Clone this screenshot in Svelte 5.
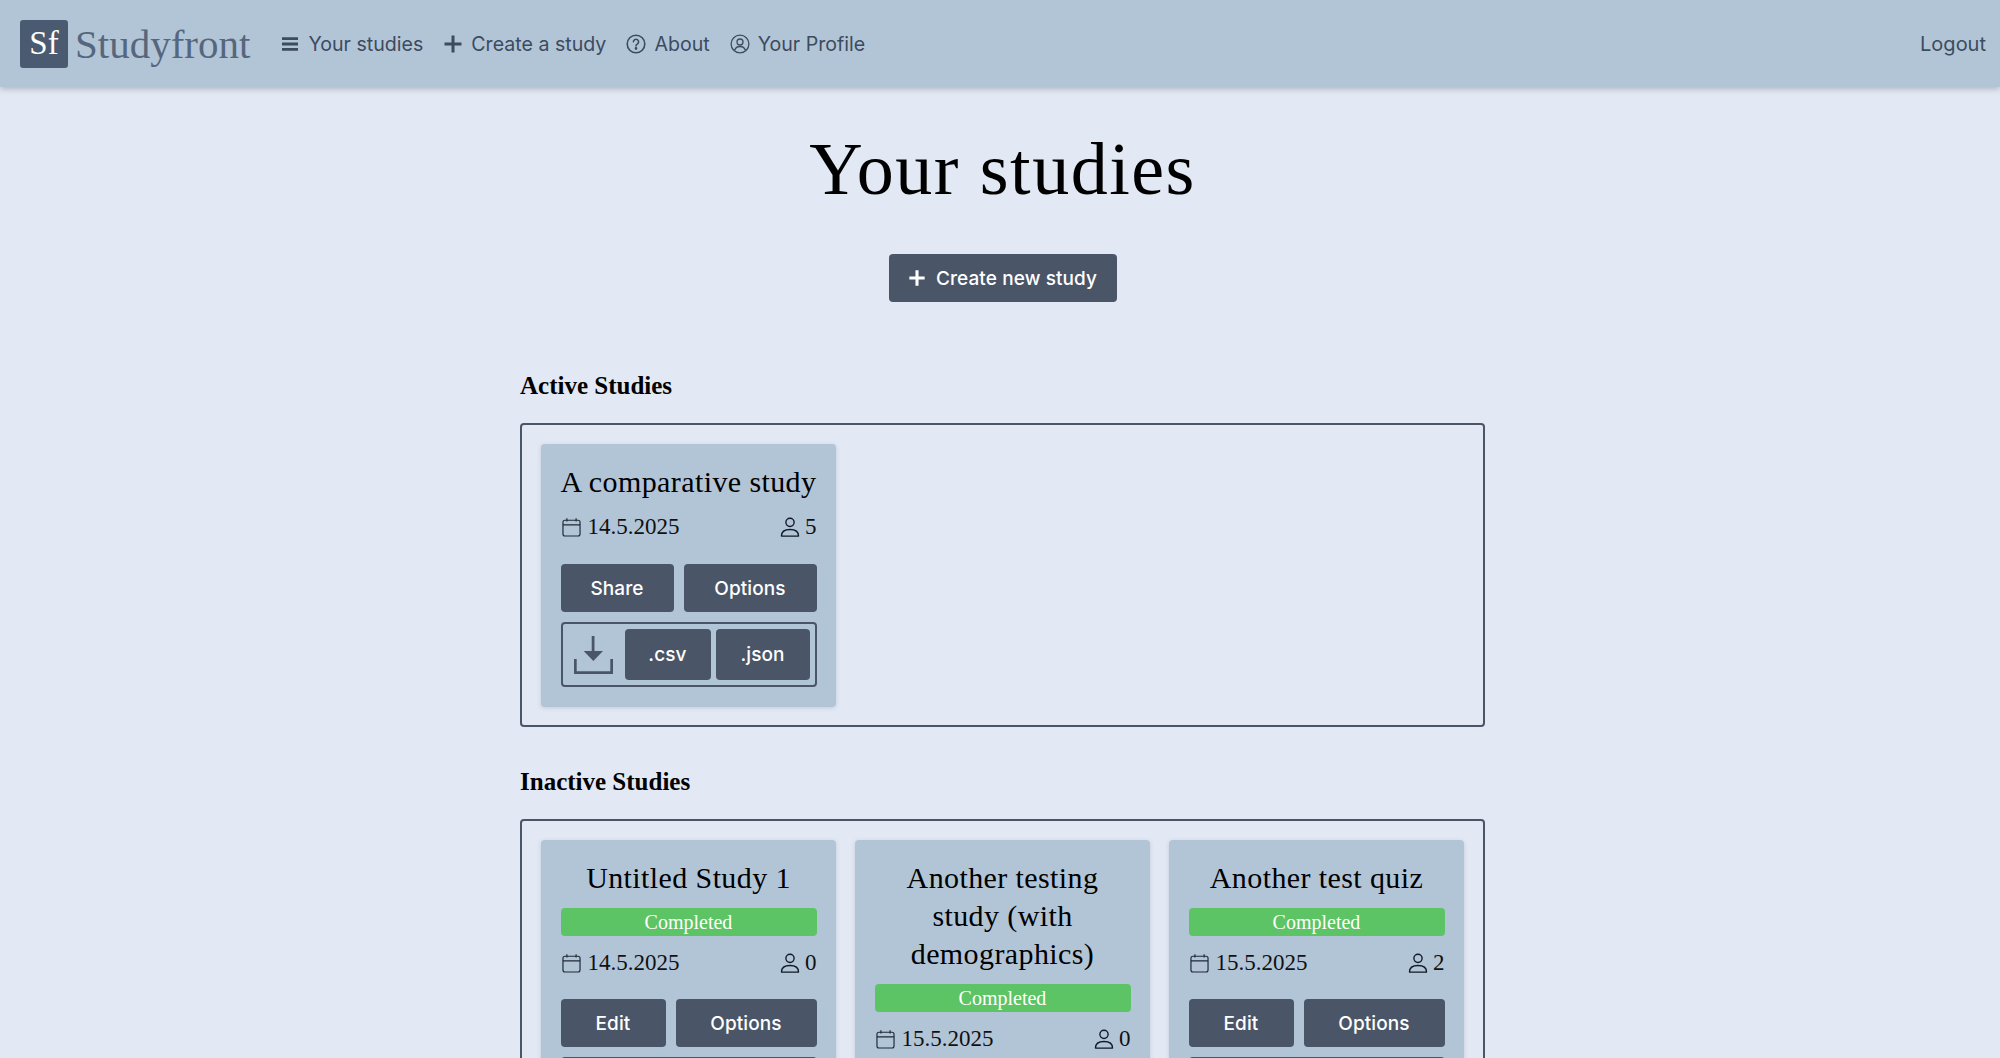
<script lang="ts">
	const active = [{ title: 'A comparative study', date: '14.5.2025', count: 5 }];
	const inactive = [
		{ title: 'Untitled Study 1', date: '14.5.2025', count: 0 },
		{ title: 'Another testing study (with demographics)', date: '15.5.2025', count: 0 },
		{ title: 'Another test quiz', date: '15.5.2025', count: 2 }
	];
</script>

{#snippet meta(date, count)}
	<div class="meta">
		<span class="meta-item">
			<svg width="21" height="21" viewBox="0 0 16 16" fill="none" stroke="#1f2937" stroke-width="0.9">
				<rect x="1.5" y="2.5" width="13" height="12" rx="1.5" />
				<path d="M1.5 6h13M4.5 1v2.500M11.500 1v2.500" />
			</svg>
			{date}
		</span>
		<span class="meta-item person">
			<svg width="22" height="22" viewBox="0 0 16 16" fill="none" stroke="#111827" stroke-width="1">
				<circle cx="8" cy="4.600" r="3" />
				<path d="M1.800 14.600c0-3.200 2.600-4.800 6.200-4.800s6.200 1.600 6.200 4.800z" stroke-linejoin="round" />
			</svg>
			{count}
		</span>
	</div>
{/snippet}

{#snippet download()}
	<div class="download">
		<svg class="dl-icon" width="39" height="38" viewBox="0 0 39 38" fill="#4a5568">
			<path d="M17.700 0h2.800v16h-2.800z" />
			<path d="M9.700 15h19.300l-9.650 10z" />
			<path d="M0 23h2.700v12.300h33.600V23H39v15H0z" />
		</svg>
		<button class="btn small csv">.csv</button>
		<button class="btn small json">.json</button>
	</div>
{/snippet}

<nav class="nav">
	<div class="brand">
		<span class="logo">Sf</span>
		<span class="brand-name">Studyfront</span>
	</div>
	<ul class="links">
		<li>
			<svg width="20" height="20" viewBox="0 0 20 20" fill="#3d4b5f"><path d="M2 3.200h16v2.800H2zM2 8.600h16v2.800H2zM2 14h16v2.800H2z" /></svg>
			Your studies
		</li>
		<li>
			<svg width="20" height="20" viewBox="0 0 20 20" fill="#3d4b5f"><path d="M8.500 1.500h3v7h7v3h-7v7h-3v-7h-7v-3h7z" /></svg>
			Create a study
		</li>
		<li>
			<svg width="20" height="20" viewBox="0 0 20 20" fill="none" stroke="#3d4b5f" stroke-width="1.600">
				<circle cx="10" cy="10" r="8.800" />
				<path d="M7.400 7.800a2.600 2.600 0 1 1 3.900 2.300c-.9.500-1.300.9-1.300 1.900" stroke-linecap="round" />
				<circle cx="10" cy="14.500" r=".6" fill="#3d4b5f" />
			</svg>
			About
		</li>
		<li>
			<svg width="20" height="20" viewBox="0 0 20 20" fill="none" stroke="#3d4b5f" stroke-width="1.300">
				<circle cx="10" cy="10" r="8.900" />
				<circle cx="10" cy="8" r="3" />
				<path d="M4.600 16.300c.8-2.400 2.800-3.800 5.400-3.800s4.600 1.400 5.400 3.800" />
			</svg>
			Your Profile
		</li>
	</ul>
	<span class="logout">Logout</span>
</nav>

<main class="page">
	<h1>Your studies</h1>
	<div class="create">
		<button class="btn create-btn">
			<svg width="18" height="18" viewBox="0 0 20 20" fill="#fff"><path d="M8.300 1.500h3.400v6.800h6.800v3.400h-6.800v6.800H8.300v-6.800H1.500V8.300h6.800z" /></svg>
			Create new study
		</button>
	</div>

	<h2>Active Studies</h2>
	<section class="box">
		{#each active as study}
			<article class="card">
				<h3>{study.title}</h3>
				{@render meta(study.date, study.count)}
				<div class="actions">
					<button class="btn share">Share</button>
					<button class="btn options">Options</button>
				</div>
				{@render download()}
			</article>
		{/each}
	</section>

	<h2>Inactive Studies</h2>
	<section class="box">
		{#each inactive as study}
			<article class="card">
				<h3>{study.title}</h3>
				<div class="status">Completed</div>
				{@render meta(study.date, study.count)}
				<div class="actions">
					<button class="btn edit">Edit</button>
					<button class="btn options">Options</button>
				</div>
				{@render download()}
			</article>
		{/each}
	</section>
</main>

<style>
	:global(body) {
		background: #e2e9f4;
		color: #000;
		font-family: 'Liberation Serif', serif;
	}
	.nav {
		display: flex;
		align-items: center;
		height: 87px;
		padding: 0 14px 0 20px;
		background: #b2c5d7;
		box-shadow: 0 2px 6px rgba(74, 85, 104, 0.35);
		font-family: Inter, sans-serif;
		color: #3d4b5f;
		box-sizing: border-box;
	}
	.brand {
		display: flex;
		align-items: center;
		gap: 7px;
	}
	.logo {
		display: flex;
		align-items: center;
		justify-content: center;
		width: 48px;
		height: 48px;
		background: #4a5a70;
		border-radius: 3px;
		color: #fff;
		font-family: 'Liberation Serif', serif;
		font-size: 33px;
	}
	.brand-name {
		font-family: 'Liberation Serif', serif;
		font-size: 41px;
		color: #56677d;
	}
	.links {
		display: flex;
		gap: 20px;
		list-style: none;
		margin: 0 0 0 30px;
		padding: 0;
		font-size: 19.6px;
	}
	.links li {
		display: flex;
		align-items: center;
		gap: 8px;
	}
	.logout {
		margin-left: auto;
		font-size: 20px;
	}
	.page {
		width: 965px;
		margin: 0 0 0 calc(50% - 480px);
		padding-bottom: 40px;
	}
	h1 {
		margin: 0;
		padding-top: 37px;
		font-size: 74px;
		font-weight: 400;
		line-height: 90px;
		text-align: center;
		letter-spacing: 1.5px;
	}
	.create {
		display: flex;
		justify-content: center;
		margin-top: 40px;
	}
	.btn {
		border: none;
		border-radius: 4px;
		background: #4a5568;
		color: #fff;
		font-family: Inter, sans-serif;
		font-size: 19px;
		font-weight: 500;
		letter-spacing: 0.1px;
		height: 48px;
		padding: 0;
	}
	.create-btn {
		display: flex;
		align-items: center;
		justify-content: center;
		gap: 10px;
		width: 228px;
	}
	h2 {
		margin: 68px 0 0;
		font-size: 25px;
		line-height: 32px;
		font-weight: 700;
	}
	.box {
		display: grid;
		grid-template-columns: repeat(3, 295px);
		gap: 19px;
		margin-top: 21px;
		padding: 19px 19px 18px;
		border: 2px solid #4a5568;
		border-radius: 4px;
	}
	h2 + .box ~ h2 {
		margin-top: 39px;
	}
	.card {
		display: flex;
		flex-direction: column;
		padding: 19px 19.5px 20px;
		background: #b2c5d7;
		border-radius: 4px;
		box-shadow: 0 1px 4px rgba(74, 85, 104, 0.2);
		box-sizing: border-box;
	}
	h3 {
		margin: 0;
		font-size: 30px;
		font-weight: 400;
		line-height: 38px;
		letter-spacing: 0.4px;
		text-align: center;
	}
	.status {
		margin-top: 11px;
		height: 28px;
		line-height: 28px;
		background: #5cc464;
		border-radius: 4px;
		color: #fff;
		font-size: 20px;
		text-align: center;
	}
	.meta {
		display: flex;
		justify-content: space-between;
		align-items: center;
		margin-top: 10px;
		height: 32px;
		font-size: 23px;
		color: #111;
	}
	.status + .meta {
		margin-top: 11px;
	}
	.meta-item {
		display: flex;
		align-items: center;
		gap: 6px;
	}
	.person {
		gap: 4px;
	}
	.actions {
		display: flex;
		gap: 10px;
		margin-top: 21px;
	}
	.status + .meta + .actions {
		margin-top: 20px;
	}
	.share {
		flex: 113 0 0;
	}
	.edit {
		flex: 105 0 0;
	}
	.options {
		flex: 133 0 0;
	}
	.edit + .options {
		flex: 141 0 0;
	}
	.download {
		display: flex;
		align-items: center;
		gap: 5px;
		margin-top: 10px;
		padding: 5px 5px 5px 11px;
		border: 2px solid #4a5568;
		border-radius: 4px;
	}
	.dl-icon {
		flex: none;
		margin-right: 7px;
	}
	.small {
		height: 51px;
	}
	.csv {
		flex: 86 0 0;
	}
	.json {
		flex: 94 0 0;
	}
</style>
